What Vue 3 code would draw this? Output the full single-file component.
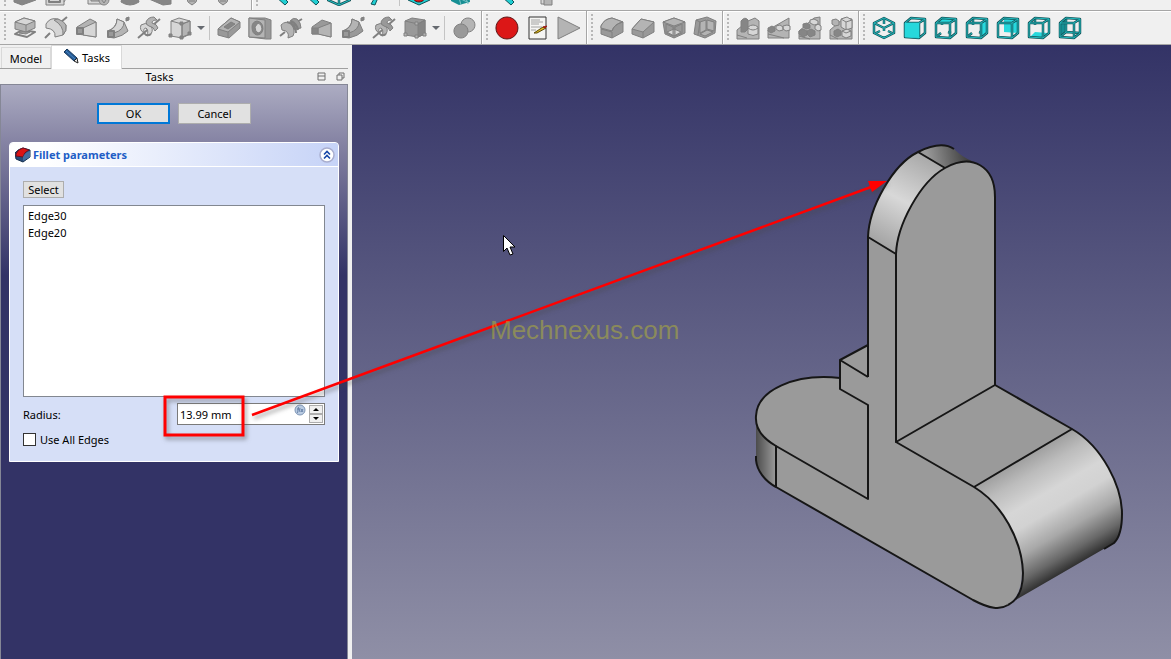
<script setup>
import { ref } from 'vue'

const edges = ['Edge30', 'Edge20']
const radius = ref('13.99 mm')
const useAll = ref(false)

// Each icon is a list of [path, paint class] layers on a 24x24 grid.
const wire = (d) => [[d, 'wo'], [d, 'wi']]
const FRAME = 'M2 7H16V22L2 21ZM2 7L8 2L22 3L16 7M22 3V17L16 22'
const BACK = 'M8 2V16L22 17M8 16L2 21'
const HIDDEN = 'M8 3V9M2 21L7 17M14 16L17 17'
const helix = (a, c) => [
  ['M1 22L23 3', 'rod'],
  ['M4 9Q8 6 13 9Q17 13 14 18L10 20Q12 14 9 12Q6 12 7 17Q2 14 4 9Z', a],
  ['M9 6Q11 1 17 1L20 4Q15 4 15 7Q20 8 21 12L18 15Q17 11 12 10Q9 9 9 6Z', c],
  ['M7 17Q10 21 14 18', 'rod'],
]

const icons = {
  pad: [['M2 18L9 14L22 16L14 21Z', 'w thick'], ['M6 17L10 15L17 16L13 18Z', 'k'], ['M2 6L11 2L22 5V12L13 16L2 13Z', 'm'], ['M2 6L11 2L22 5L13 9Z', 'l'], ['M13 9V16', 'n']],
  revolve: [['M1 22L6 17M17 6L23 1', 'rod'], ['M2 8Q6 1 14 3L22 9Q23 15 19 19L11 21Q12 13 2 12Z', 'l'], ['M14 3Q20 5 22 9Q23 15 19 19Q20 10 10 4Z', 'm']],
  loft: [['M2 11L15 3L21 6V21L9 19L2 18Z', 'm'], ['M8 12L21 6V21L8 19Z', 'l'], ['M2 12H8V18H2Z', 'k thick']],
  loftDark: [['M2 11L12 4L21 7V21L9 18L2 18Z', 'k'], ['M8 12L21 7V21L8 18Z', 'm'], ['M2 12H8V18H2Z', 'g']],
  pipe: [['M2 15Q11 11 11 3L18 6L22 15Q17 20 8 22L2 21Z', 'm'], ['M11 3L18 6Q18 14 8 17L2 15Q11 12 11 3Z', 'l'], ['M2 15H8V21H2Z', 'k thick'], ['M20 2L23 1V4L20 5Z', 'g']],
  pipeDark: [['M2 15Q11 11 11 3L18 6L22 15Q17 20 8 22L2 21Z', 'k'], ['M11 3L18 6Q18 14 8 17L2 15Q11 12 11 3Z', 'm'], ['M2 15H8V21H2Z', 'k thick'], ['M20 2L23 1V4L20 5Z', 'g']],
  helix: helix('l', 'm'),
  helixDark: helix('m', 'k'),
  box: [['M3 5L11 2L22 5V18L14 22L3 20Z', 'l'], ['M14 8L22 5V18L14 21Z', 'm'], ['M3 5L14 8L22 5M14 8V22', 'n'], ['M1 18H4V21H1ZM12 20H15V23H12ZM20 16H23V19H20ZM12 6H15V9H12Z', 'g']],
  boxDark: [['M2 5L9 2L22 4V18L15 21L2 19Z', 'k'], ['M15 8L22 4V18L15 21Z', 'g'], ['M2 5L15 8L22 4', 'n'], ['M1 17H4V20H1ZM12 19H15V22H12ZM20 17H23V20H20ZM12 6H15V9H12Z', 'm']],
  pocket: [['M1 13L14 2L23 6V12L12 22L1 19Z', 'k'], ['M1 13L14 2L23 6L11 16Z', 'm'], ['M7 11L14 6L18 8L11 13Z', 'g'], ['M11 16V22', 'n']],
  hole: [['M1 2H17L23 4V23H18L1 21Z', 'k'], ['M1 2L17 4V22L1 21Z', 'm'], ['M9 5Q15 6 15 13Q14 19 9 19Q4 18 4 11Q4 6 9 5Z', 'g'], ['M10 7Q14 8 14 13Q13 17 10 17Q7 15 7 11Z', 'l']],
  groove: [['M1 20L6 16M18 6L23 3', 'rod'], ['M11 5Q14 1 18 3L21 7L22 12L12 14Z', 'k'], ['M2 9Q7 4 12 8Q17 14 14 20L9 22Q11 15 3 14Z', 'm'], ['M8 6Q17 8 17 17M12 5Q18 8 19 14', 'rod']],
  bool: [['M16 2A7 7 0 1 1 15.9 2Z', 'm'], ['M9 8A7 7 0 1 1 8.9 8Z', 'k']],
  record: [['M12 1A11 11 0 1 1 11.9 1Z', 'red']],
  macro: [['M3 1H20V23H3Z', 'page'], ['M5 4H14M5 6H17M5 8H13M5 11H16M5 14H10', 'rule'], ['M8 17L17 11L20 12L11 17Z', 'yel'], ['M17 11L21 10L19 12Z', 'tip']],
  play: [['M1 1V23L23 12Z', 'm']],
  fillet: [['M1 10Q4 3 12 2L23 6V16L12 22L1 18Z', 'k'], ['M1 10Q4 3 12 2L23 6Q14 8 12 15L1 12Z', 'm'], ['M1 13L12 16V22M12 15Q14 8 23 6', 'n']],
  chamfer: [['M1 13L10 3L23 6V16L12 22L1 18Z', 'k'], ['M1 13L10 3L23 6L12 16Z', 'm'], ['M12 16V22', 'n']],
  draft: [['M1 6L12 2L23 6V17L12 22L3 18Z', 'k'], ['M1 6L12 10L23 6L12 2Z', 'm'], ['M5 16L12 13L19 16L12 20Z', 'l'], ['M4 8L11 11V20L4 17ZM13 11L20 8V17L13 20Z', 'n'], ['M12 10V22', 'n']],
  thick: [['M3 4L14 1L23 5L22 17L12 22L1 18Z', 'k'], ['M7 6L13 4V14L7 17Z', 'm'], ['M14 4L21 6V15L14 13Z', 'm'], ['M7 18L14 14L20 16L12 20Z', 'm'], ['M3 4L7 6L5 19', 'n']],
  mirror: [['M1 14L12 5L19 2L23 5V23H1Z', 'm'], ['M5 5Q9 0 12 4V13L9 16H5Z', 'g'], ['M12 11Q17 7 22 11V18Q17 21 12 18Z', 'l'], ['M12 12Q17 16 22 12M1 19L11 22', 'n']],
  linear: [['M1 14L22 2V22H1Z', 'm'], ['M1 12L5 10L8 12V15L4 17L1 15Z', 'g'], ['M9 10L13 9L16 11V14L12 15L9 13ZM16 10L20 9L23 10V14L19 15L16 13Z', 'l'], ['M1 18L17 22', 'n']],
  polar: [['M1 15L16 2L22 1V23H1Z', 'm'], ['M1 15L5 13L9 15V19L5 21L1 18ZM5 8L9 7L12 9V12L8 13L5 11ZM9 15L13 13L17 15V19L12 21L9 18Z', 'g'], ['M12 4L16 3L20 5V8L16 9L12 7ZM17 10L20 8L23 10V14L20 15L17 13Z', 'l'], ['M1 20L12 23', 'n']],
  multi: [['M1 14L15 2L23 3V23H1Z', 'm'], ['M12 3L18 1L23 4V12L17 14L12 11Z', 'l'], ['M3 4L7 3L10 5V9L6 10L3 8Z', 'm'], ['M5 15L9 13L12 15V19L8 21L5 19Z', 'g'], ['M13 15L18 13L22 15V20L17 22L13 20Z', 'l'], ['M12 3L17 6L23 4M17 6V14M13 15L17 17L22 15M1 19L9 23', 'n']],
  iso: wire('M12 2L22 7V17L12 22L2 17V7ZM2 7L12 12L22 7M12 12V15M12 20V22M12 3V8M4 17L8 15M20 17L16 15'),
  front: [...wire(FRAME), ['M2 7H16V22L2 21Z', 'cy']],
  top: [...wire(HIDDEN), ['M2 7L8 2L22 3L16 7Z', 'cy'], ...wire(FRAME)],
  right: [...wire(HIDDEN), ['M16 7L22 3V17L16 22Z', 'cy'], ...wire(FRAME)],
  rear: [['M8 3L22 3V17L8 16Z', 'cy'], ...wire(FRAME)],
  bottom: [...wire('M8 2V9'), ['M3 21L8 16L21 17L16 21Z', 'cy'], ...wire(FRAME)],
  left: [['M2 7L8 3V16L2 21Z', 'dc'], ...wire(BACK), ...wire(FRAME)],
  // upper row
  block: [['M1 10L15 5L23 10V18L9 23L1 20Z', 'g']],
  sheet: [['M2 4H20V23H2Z', 'l'], ['M5 12H16V20H5Z', 'w thick'], ['M18 12L23 15L20 20', 'n']],
  sheetCheck: [['M1 4H16V22H1Z', 'l'], ['M4 12H14V19H4Z', 'm'], ['M17 13A5 5 0 1 1 16.9 13Z', 'm'], ['M14 17L17 21L21 15', 'n']],
  cone: [['M6 8Q12 4 18 8L21 20Q12 26 3 20Z', 'g']],
  slab: [['M0 14L10 13L22 18V22L14 23L0 17Z', 'g']],
  bulb: [['M12 5Q20 12 16 20L12 23L8 20Q4 12 12 5Z', 'm'], ['M9 19H15M8 16H16', 'n']],
  zoom: [['M11 8L23 20L20 23L10 14Z', 'cyo']],
  cubeCy: wire('M12 3L23 8V18L12 23L1 18V8ZM12 12V23M1 18L12 14L23 18'),
  fly: [['M15 10L24 14L19 18L17 23L13 22L16 17Z', 'cyo']],
  stop: [['M12 2L23 10V18L12 23L1 18V10Z', 'cyo'], ['M12 10A6 5 0 1 1 11.9 10Z', 'red']],
  texture: [['M2 12L20 10L21 20L10 23L2 19Z', 'dc'], ['M4 13L20 21M9 12L12 23M15 11L19 22', 'lt']],
  sheet2: [['M7 8H16V22H7Z', 'l'], ['M10 13H18V23H10Z', 'm']],
}

const arrow = { kind: 'arrow' }
const sep = { kind: 'sep' }
const gap = { kind: 'gap' }
const b = (icon, label) => ({ kind: 'button', icon, label })

const rows = [
  [
    [b('block', 'Body'), b('sheet', 'Sketch'), gap, b('sheetCheck', 'Validate sketch'), b('cone', 'Cone'), b('slab', 'Plane'), b('bulb', 'Point'), b('bulb', 'Line'), arrow],
    [b('zoom', 'Fit all'), b('zoom', 'Fit selection'), b('cubeCy', 'Bounding box'), b('fly', 'Navigate'), arrow, sep, b('stop', 'Clipping'), arrow, b('texture', 'Texture'), arrow, b('zoom', 'Zoom'), gap, b('sheet2', 'Windows')],
  ],
  [
    [b('pad', 'Pad'), b('revolve', 'Revolution'), b('loft', 'Additive loft'), b('pipe', 'Additive pipe'), b('helix', 'Additive helix'), b('box', 'Additive box'), arrow, sep,
      b('pocket', 'Pocket'), b('hole', 'Hole'), b('groove', 'Groove'), b('loftDark', 'Subtractive loft'), b('pipeDark', 'Subtractive pipe'), b('helixDark', 'Subtractive helix'), b('boxDark', 'Subtractive box'), arrow, sep, b('bool', 'Boolean operation')],
    [b('record', 'Record macro'), b('macro', 'Macros'), b('play', 'Execute macro')],
    [b('fillet', 'Fillet'), b('chamfer', 'Chamfer'), b('draft', 'Draft'), b('thick', 'Thickness')],
    [b('mirror', 'Mirrored'), b('linear', 'Linear pattern'), b('polar', 'Polar pattern'), b('multi', 'MultiTransform')],
    [b('iso', 'Axonometric'), b('front', 'Front'), b('top', 'Top'), b('right', 'Right'), b('rear', 'Rear'), b('bottom', 'Bottom'), b('left', 'Left')],
  ],
]
</script>

<template>
  <div class="app">
    <header>
      <div v-for="(row, r) in rows" :key="r" class="toolrow" :class="{ clipped: r === 0 }">
        <div v-for="(group, g) in row" :key="g" class="group" role="toolbar">
          <span class="grip"></span>
          <template v-for="(item, i) in group" :key="i">
            <button v-if="item.kind === 'button'" class="tool" :aria-label="item.label">
              <svg width="24" height="24" viewBox="0 0 24 24">
                <path v-for="(layer, p) in icons[item.icon]" :key="p" :d="layer[0]" :class="layer[1]" />
              </svg>
            </button>
            <button v-else-if="item.kind === 'arrow'" class="drop" aria-label="More"></button>
            <span v-else :class="item.kind"></span>
          </template>
        </div>
      </div>
    </header>

    <main>
      <aside>
        <nav class="tabs" role="tablist">
          <button class="tab" role="tab" aria-selected="false">Model</button>
          <button class="tab active" role="tab" aria-selected="true">
            <svg width="16" height="16" viewBox="0 0 16 16">
              <path d="M1 4L4 1L14 10L11 13Z" fill="#245a94" stroke="#15375c" />
              <path d="M3 3L12 11" stroke="#4b86c2" />
              <path d="M14 10L15 15L11 13Z" fill="#e8e8e8" stroke="#222" />
            </svg>
            Tasks
          </button>
        </nav>
        <div class="dock-title">
          <span>Tasks</span>
          <div class="dock-buttons">
            <button aria-label="Minimize">
              <svg width="9" height="9" viewBox="0 0 9 9"><path d="M1 1H8V8H1ZM1 4H8" /></svg>
            </button>
            <button aria-label="Float">
              <svg width="9" height="9" viewBox="0 0 9 9"><path d="M3 3V1H8V6H6M1 3H6V8H1Z" /></svg>
            </button>
          </div>
        </div>

        <div class="task-area">
          <div class="actions">
            <button class="push default">OK</button>
            <button class="push">Cancel</button>
          </div>

          <section class="box">
            <div class="box-head">
              <svg width="16" height="16" viewBox="0 0 16 16">
                <path d="M0 6Q3 2 8 1L15 3V10L8 15L1 12Z" fill="#274a78" stroke="#16304f" />
                <path d="M1 7Q3 2 8 1L14 3Q9 5 8 10L1 9Z" fill="#dc1414" stroke="#6c1020" />
                <path d="M8 10Q10 5 15 4V10L8 14Z" fill="#456d9e" />
              </svg>
              <h2>Fillet parameters</h2>
              <button class="fold" aria-label="Collapse">
                <svg width="16" height="16" viewBox="0 0 16 16">
                  <circle cx="8" cy="8" r="7" fill="#fff" stroke="#a9aecf" stroke-width="1.5" />
                  <path d="M5 7.500L8 4.500L11 7.500M5 11.500L8 8.500L11 11.500" fill="none" stroke="#1848a8" stroke-width="1.600" />
                </svg>
              </button>
            </div>
            <div class="box-body">
              <button class="push small">Select</button>
              <ul class="list">
                <li v-for="edge in edges" :key="edge">{{ edge }}</li>
              </ul>
              <div class="field">
                <label for="radius">Radius:</label>
                <div class="spin">
                  <input id="radius" v-model="radius" type="text" />
                  <svg class="fx" width="12" height="12" viewBox="0 0 12 12">
                    <circle cx="6" cy="6" r="5" fill="#b9cbe2" stroke="#7d95b5" />
                    <path d="M3 9Q4 9 4 6Q4 3 5 3M3 5H5M6 4Q5 6 6 8M7 5L9 8M9 5L7 8" fill="none" stroke="#526f98" stroke-width="0.800" />
                  </svg>
                  <div class="steps">
                    <button aria-label="Increase"><span class="up"></span></button>
                    <button aria-label="Decrease"><span class="down"></span></button>
                  </div>
                </div>
              </div>
              <label class="check"><input v-model="useAll" type="checkbox" /> Use All Edges</label>
            </div>
          </section>
        </div>
      </aside>

      <section class="viewport" aria-label="3D view">
        <svg width="819" height="614" viewBox="352 45 819 614">
          <defs>
            <linearGradient id="nose" gradientUnits="userSpaceOnUse" x1="1023" y1="458" x2="1083" y2="561">
              <stop offset="0" stop-color="#9f9f9f" />
              <stop offset="0.150" stop-color="#bcbcbc" />
              <stop offset="0.350" stop-color="#d6d6d6" />
              <stop offset="0.500" stop-color="#d2d2d2" />
              <stop offset="0.700" stop-color="#a8a8a8" />
              <stop offset="0.880" stop-color="#686868" />
              <stop offset="1" stop-color="#303030" />
            </linearGradient>
            <linearGradient id="crown" gradientUnits="userSpaceOnUse" x1="930" y1="160" x2="884" y2="246">
              <stop offset="0" stop-color="#aaaaaa" />
              <stop offset="0.500" stop-color="#d8d8d8" />
              <stop offset="1" stop-color="#a4a4a4" />
            </linearGradient>
            <linearGradient id="crownBack" gradientUnits="userSpaceOnUse" x1="928" y1="160" x2="966" y2="152">
              <stop offset="0" stop-color="#999999" />
              <stop offset="1" stop-color="#404040" />
            </linearGradient>
            <linearGradient id="heel" x1="0" y1="0" x2="1" y2="0">
              <stop offset="0" stop-color="#4c4c4c" />
              <stop offset="1" stop-color="#9c9c9c" />
            </linearGradient>
          </defs>
          <path fill="#9a9a9a" d="M839 378C795 373 757 390 756 416C755 428 762 438 776 446V487L973 600C990 609 1000 610 1008 605C1034 588 1024 520 974 487L1072 429L995 385V200H896L868 237V345L840 360Z" />
          <path fill="url(#heel)" d="M756 416C756 430 763 439 776 446V487C765 480 756 470 756 460Z" />
          <path fill="url(#nose)" d="M974 487L1072 429C1103 447 1122 487 1122 514C1122 529 1119 538 1114 543L1014 601C1022 594 1023 584 1023 573C1022 540 1002 504 974 487Z" />
          <path fill="url(#crown)" d="M868 237C869 208 892 165 918 152L945 168C920 182 897 225 896 254Z" />
          <path fill="url(#crownBack)" d="M918 152C932 145 945 143 954 149Q962 157 972 161Q958 161 945 168Z" />
          <path fill="#9a9a9a" d="M896 254C897 225 920 182 945 168C972 153 995 166 995 197V385L896 441Z" />
          <g class="edge">
            <path d="M896 442V254C897 225 920 182 945 168C972 153 995 166 995 197V385Z" />
            <path d="M868 377V237C869 208 892 165 918 152C932 145 945 143 954 149M918 152L945 168M868 237L896 254" />
            <path d="M868 345L840 360L868 377M840 360V389L868 405V499L776 446" />
            <path d="M840 378C795 373 757 390 756 416C755 428 762 438 776 446V487L973 600C990 609 1000 610 1008 605" />
            <path d="M756 456V460C757 471 765 481 776 487" />
            <path d="M896 442L974 487C1002 504 1022 540 1023 573C1023 590 1018 600 1008 605" />
            <path d="M995 385L1072 429L974 487M1072 429C1103 447 1122 487 1122 514C1122 529 1119 538 1114 543L1104 549" />
          </g>
          <path d="M503.500 235.500V251.500L507 248L510 255L513 254L510 247H515Z" fill="#fff" stroke="#000" />
        </svg>
      </section>
    </main>

    <svg class="callout" width="1171" height="659" viewBox="0 0 1171 659" aria-hidden="true">
      <g class="mark">
        <rect x="165" y="397" width="78" height="38" fill="none" stroke="#ff0000" stroke-width="3" />
        <path d="M252 415L871 187" fill="none" stroke="#ff0000" stroke-width="2.500" />
        <path d="M868 181L887 181L872 192Z" fill="#ff0000" />
      </g>
      <text x="490" y="339">Mechnexus.com</text>
    </svg>
  </div>
</template>

<style>
html, body { margin: 0; }
</style>

<style scoped>
* { box-sizing: border-box; }
.app {
  position: relative;
  display: flex;
  flex-direction: column;
  min-height: 100vh;
  overflow: hidden;
  background: #f0f0f0;
  color: #000;
  font: 11px/17px "Noto Sans", "Open Sans", sans-serif;
}
button, input { font: inherit; color: inherit; }
button { padding: 0; border: 0; background: none; }

.toolrow { display: flex; height: 34px; border-bottom: 1px solid #a6a6a6; box-shadow: inset 0 1px #fff; }
.toolrow.clipped { height: 11px; align-items: flex-end; overflow: hidden; box-shadow: none; }
.group { display: flex; align-items: center; height: 33px; padding-right: 2px; border-right: 1px solid #a6a6a6; box-shadow: 1px 0 #fff; }
.group:last-child { border-right: 0; box-shadow: none; }
.grip { width: 2px; height: 28px; margin: 0 3px 0 4px; background: repeating-linear-gradient(#b8b8b8 0 2px, transparent 2px 4px); }
.tool { display: grid; place-items: center; width: 31px; height: 31px; flex: none; }
.drop { width: 11px; height: 20px; display: grid; place-items: center; }
.drop::after { content: ""; border: 4px solid transparent; border-top-color: #666a70; border-bottom: 0; }
.sep { width: 1px; height: 24px; margin: 0 3px; background: #c4c4c4; }
.gap { width: 12px; }

.tool path { stroke: #808080; stroke-linejoin: round; }
.tool .l { fill: #d6d6d6; }
.tool .m { fill: #b4b4b4; }
.tool .k { fill: #999999; }
.tool .g { fill: #868686; }
.tool .w, .tool .n, .tool .rod { fill: none; }
.tool .thick, .tool .rod { stroke-width: 2; }
.tool .wo { fill: none; stroke: #14565b; stroke-width: 2.500; }
.tool .wi { fill: none; stroke: #22bcc0; stroke-width: 1; }
.tool .cy { fill: #27d8dc; stroke: none; }
.tool .dc { fill: #168f94; stroke: none; }
.tool .lt { fill: none; stroke: #7cc4c6; }
.tool .cyo { fill: #20ced2; stroke: #0d5359; }
.tool .red { fill: #dc1717; stroke: #5b1414; }
.tool .page { fill: #f5f5f3; stroke: #333; }
.tool .rule { fill: none; stroke: #a2a2a2; }
.tool .yel { fill: #e0bd20; stroke: #5c4a0a; }
.tool .tip { fill: #d02020; stroke: #9d2018; }

main { display: flex; flex: 1; }
aside { display: flex; flex-direction: column; width: 348px; margin-right: 4px; flex: none; }
.tabs { display: flex; align-items: flex-end; height: 24px; padding-left: 1px; border-bottom: 1px solid #a0a0a0; }
.tab { display: flex; align-items: center; justify-content: center; gap: 3px; width: 50px; height: 21px; border: 1px solid #d9d9d9; border-bottom: 0; }
.tab.active { width: 71px; height: 24px; margin-bottom: -1px; background: #fff; }
.tab.active svg { margin-bottom: 4px; }
.dock-title { display: flex; align-items: center; height: 15px; }
.dock-title > span { flex: 1; padding-left: 2px; text-align: center; }
.dock-buttons { display: flex; gap: 10px; padding-right: 3px; }
.dock-buttons button { display: flex; }
.dock-buttons path { fill: none; stroke: #6e6e6e; }

.task-area {
  flex: 1;
  padding: 18px 8px;
  border: 1px solid #858796;
  border-bottom: 0;
  background: linear-gradient(#acacc2 0, #8684a4 56px, #333366 190px);
}
.actions { display: flex; justify-content: center; gap: 8px; }
.push { width: 73px; height: 21px; border: 1px solid #adadad; background: #e1e1e1; line-height: 17px; }
.push.default { border: 2px solid #0078d7; }
.push.small { width: 41px; height: 17px; line-height: 15px; }
.box { margin-top: 18px; border-radius: 4px 4px 0 0; overflow: hidden; border: 1px solid #fff; background: #d6dff7; }
.box-head { display: flex; align-items: center; gap: 2px; height: 24px; padding: 0 3px 0 5px; border-bottom: 1px solid #fff; background: linear-gradient(90deg, #fff 10%, #c6d3f7); }
.box-head h2 { flex: 1; margin: 0; color: #215dc6; font-size: 11px; font-weight: 700; }
.fold { display: flex; }
.box-body { display: flex; flex-direction: column; align-items: flex-start; padding: 14px 13px 13px; }
.list { align-self: stretch; height: 192px; margin: 7px 0 6px; padding: 1px 4px; border: 1px solid #828790; background: #fff; list-style: none; }
.field { display: flex; align-items: center; justify-content: space-between; align-self: stretch; }
.spin { display: flex; align-items: center; width: 148px; height: 22px; border: 1px solid #7a7a7a; background: #fff; }
.spin input { flex: 1; width: 20px; padding: 0 2px; border: 0; outline: 0; background: none; }
.fx { margin: 0 3px 8px 0; }
.steps { display: flex; flex-direction: column; width: 14px; margin-right: 1px; }
.steps button { display: grid; place-items: center; height: 9px; border: 1px solid #adadad; background: #f0f0f0; }
.up, .down { border: 3px solid transparent; }
.up { border-top: 0; border-bottom-color: #000; }
.down { border-bottom: 0; border-top-color: #000; }
.check { display: flex; align-items: center; gap: 4px; margin-top: 6px; }
.check input { appearance: none; width: 13px; height: 13px; margin: 0; border: 1px solid #333; background: #fff; }
.check input:checked { background: #0078d7; }

.viewport { flex: 1; min-width: 0; overflow: hidden; background: linear-gradient(#333366, #8f8fa6); }
.viewport svg { display: block; }
.edge path { fill: none; stroke: #161616; stroke-width: 2; stroke-linejoin: round; }
.callout { position: absolute; top: 0; left: 0; pointer-events: none; }
.mark { filter: drop-shadow(2px 3px 2px rgba(70, 70, 70, 0.5)); }
.callout text { font: 26px "Liberation Sans", Arial, sans-serif; fill: rgba(184, 184, 50, 0.5); }
</style>
